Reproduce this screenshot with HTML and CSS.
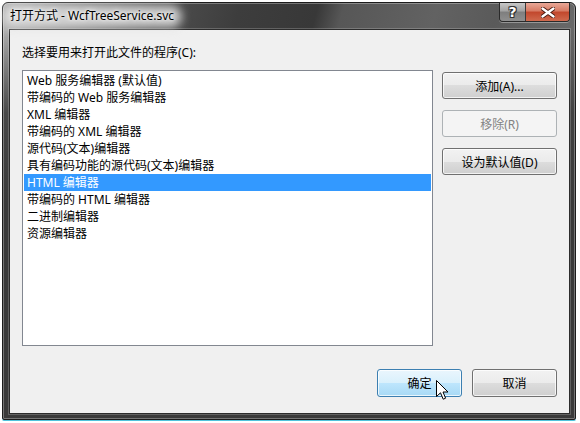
FILE: index.html
```html
<!DOCTYPE html>
<html lang="zh-CN">
<head>
<meta charset="utf-8">
<title>打开方式 - WcfTreeService.svc</title>
<link rel="stylesheet" href="styles.css">
</head>
<body>
<div class="window">
  <div class="titlebar">
    <span class="title">打开方式 - WcfTreeService.svc</span>
    <div class="caption-btns">
      <div class="cap help">?</div>
      <div class="cap close">
        <svg width="14" height="11" viewBox="0 0 14 11"><path d="M1.5 1.5 L12.5 9.5 M12.5 1.5 L1.5 9.5" stroke="#4a1a10" stroke-width="4.2" stroke-linecap="round"/><path d="M1.5 1.5 L12.5 9.5 M12.5 1.5 L1.5 9.5" stroke="#fff" stroke-width="2.4" stroke-linecap="round"/></svg>
      </div>
    </div>
  </div>
  <div class="client">
    <div class="label">选择要用来打开此文件的程序(C):</div>
    <div class="main">
      <ul class="listbox">
        <li>Web 服务编辑器 (默认值)</li>
        <li>带编码的 Web 服务编辑器</li>
        <li>XML 编辑器</li>
        <li>带编码的 XML 编辑器</li>
        <li>源代码(文本)编辑器</li>
        <li>具有编码功能的源代码(文本)编辑器</li>
        <li class="selected">HTML 编辑器</li>
        <li>带编码的 HTML 编辑器</li>
        <li>二进制编辑器</li>
        <li>资源编辑器</li>
      </ul>
      <div class="side">
        <button class="btn">添加(A)...</button>
        <button class="btn" disabled>移除(R)</button>
        <button class="btn">设为默认值(D)</button>
      </div>
    </div>
    <div class="footer">
      <button class="btn big hot">确定</button>
      <button class="btn big">取消</button>
    </div>
  </div>
</div>
<svg class="cursor" width="13" height="21" viewBox="0 0 13 21"><path d="M0.5 0.5 L0.5 16.5 L4.5 12.8 L7.2 19.2 L9.6 18.2 L7 12 L12 12 Z" fill="#fff" stroke="#000" stroke-width="1" stroke-linejoin="miter"/></svg>
</body>
</html>
```
FILE: styles.css
```css
html, body {
  margin: 0;
  padding: 0;
  background: #fff;
}
body {
  width: 580px;
  height: 423px;
  overflow: hidden;
  position: relative;
  font-family: "Noto Sans", "Noto Sans CJK SC", sans-serif;
  font-size: 12px;
  color: #000;
}
.window {
  box-sizing: border-box;
  margin: 2px 0 0 2px;
  width: 574px;
  height: 418px;
  border: 1px solid #1c1c1c;
  border-radius: 6px 6px 2px 2px;
  padding: 0 5px 5px 6px;
  display: flex;
  flex-direction: column;
  background:
    linear-gradient(to bottom, rgba(58,58,58,0) 0, rgba(58,58,58,0) 27px, rgba(58,58,58,0.85) 110px, #3a3a3a 200px),
    linear-gradient(105deg, #b4b4b4 0, #9a9a9a 40px, #505050 150px, #3d3d3d 230px, #383838 305px, #575757 330px, #626262 420px, #5a5a5a 480px, #6c6c6c 574px);
  box-shadow: inset 0 0 0 1px rgba(255,255,255,0.3), 0 1px 0 #4fc3dc;
}
.titlebar {
  height: 26px;
  display: flex;
  justify-content: space-between;
  align-items: flex-start;
}
.title {
  position: relative;
  z-index: 0;
  margin-top: 5px;
  margin-left: 1px;
  line-height: 16px;
  font-size: 12px;
  white-space: nowrap;
  text-shadow: 0 0 6px #fff, 0 0 3px #fff;
}
.title::before {
  content: "";
  position: absolute;
  z-index: -1;
  left: -8px;
  right: -8px;
  top: -3px;
  bottom: -4px;
  border-radius: 12px;
  background: rgba(222,222,222,0.85);
  filter: blur(5px);
}
.caption-btns {
  display: flex;
  margin-right: 0;
  border: 1px solid #2a2a2a;
  border-top: none;
  border-radius: 0 0 4px 4px;
  overflow: hidden;
  box-shadow: 0 1px 0 rgba(255,255,255,0.35);
}
.cap {
  height: 18px;
  display: flex;
  align-items: center;
  justify-content: center;
}
.help {
  width: 25px;
  border-right: 1px solid #3a3a3a;
  background: linear-gradient(#c8c8c8 0, #a2a2a2 45%, #7e7e7e 50%, #8f8f8f 100%);
  color: #fff;
  font-family: "DejaVu Sans", sans-serif;
  font-weight: bold;
  font-size: 14px;
  line-height: 18px;
  text-shadow: 0 0 1px #222, 1px 1px 0 #333, -1px -1px 0 #333, 1px -1px 0 #333, -1px 1px 0 #333;
}
.close {
  width: 43px;
  background: linear-gradient(#e9a897 0, #d67a63 45%, #c2472c 50%, #cf6a4e 100%);
}
.client {
  flex: 1;
  border: 1px solid #2c2c2c;
  background: #f0f0f0;
  padding: 15px 12px 0 12px;
  display: flex;
  flex-direction: column;
  box-shadow: 0 0 0 1px rgba(255,255,255,0.2);
}
.label {
  line-height: 16px;
  height: 16px;
  margin-bottom: 9px;
}
.main {
  display: flex;
  gap: 9px;
}
.listbox {
  box-sizing: border-box;
  width: 411px;
  height: 276px;
  margin: 0;
  padding: 1px;
  list-style: none;
  background: #fff;
  border: 1px solid #828790;
}
.listbox li {
  height: 17px;
  line-height: 17px;
  padding-left: 3px;
  white-space: nowrap;
}
.listbox li.selected {
  background: #3399ff;
  color: #fff;
}
.side {
  display: flex;
  flex-direction: column;
  gap: 11px;
  margin-top: 2px;
}
.btn {
  box-sizing: border-box;
  width: 115px;
  height: 27px;
  padding: 0;
  font: inherit;
  color: #000;
  border: 1px solid #707070;
  border-radius: 3px;
  background: linear-gradient(#f2f2f2 0, #ebebeb 50%, #dddddd 50%, #cfcfcf 100%);
  box-shadow: inset 0 0 0 1px rgba(255,255,255,0.75);
}
.btn:disabled {
  border-color: #adb2b5;
  background: #f4f4f4;
  color: #838383;
  box-shadow: none;
}
.footer {
  display: flex;
  justify-content: flex-end;
  gap: 10px;
  margin-top: 23px;
}
.btn.big {
  width: 85px;
  height: 28px;
}
.btn.hot {
  border-color: #3c7fb1;
  background: linear-gradient(#eaf6fd 0, #d9f0fc 50%, #bee6fd 50%, #a7d9f5 100%);
}
.cursor {
  position: absolute;
  left: 436px;
  top: 380px;
}
```
